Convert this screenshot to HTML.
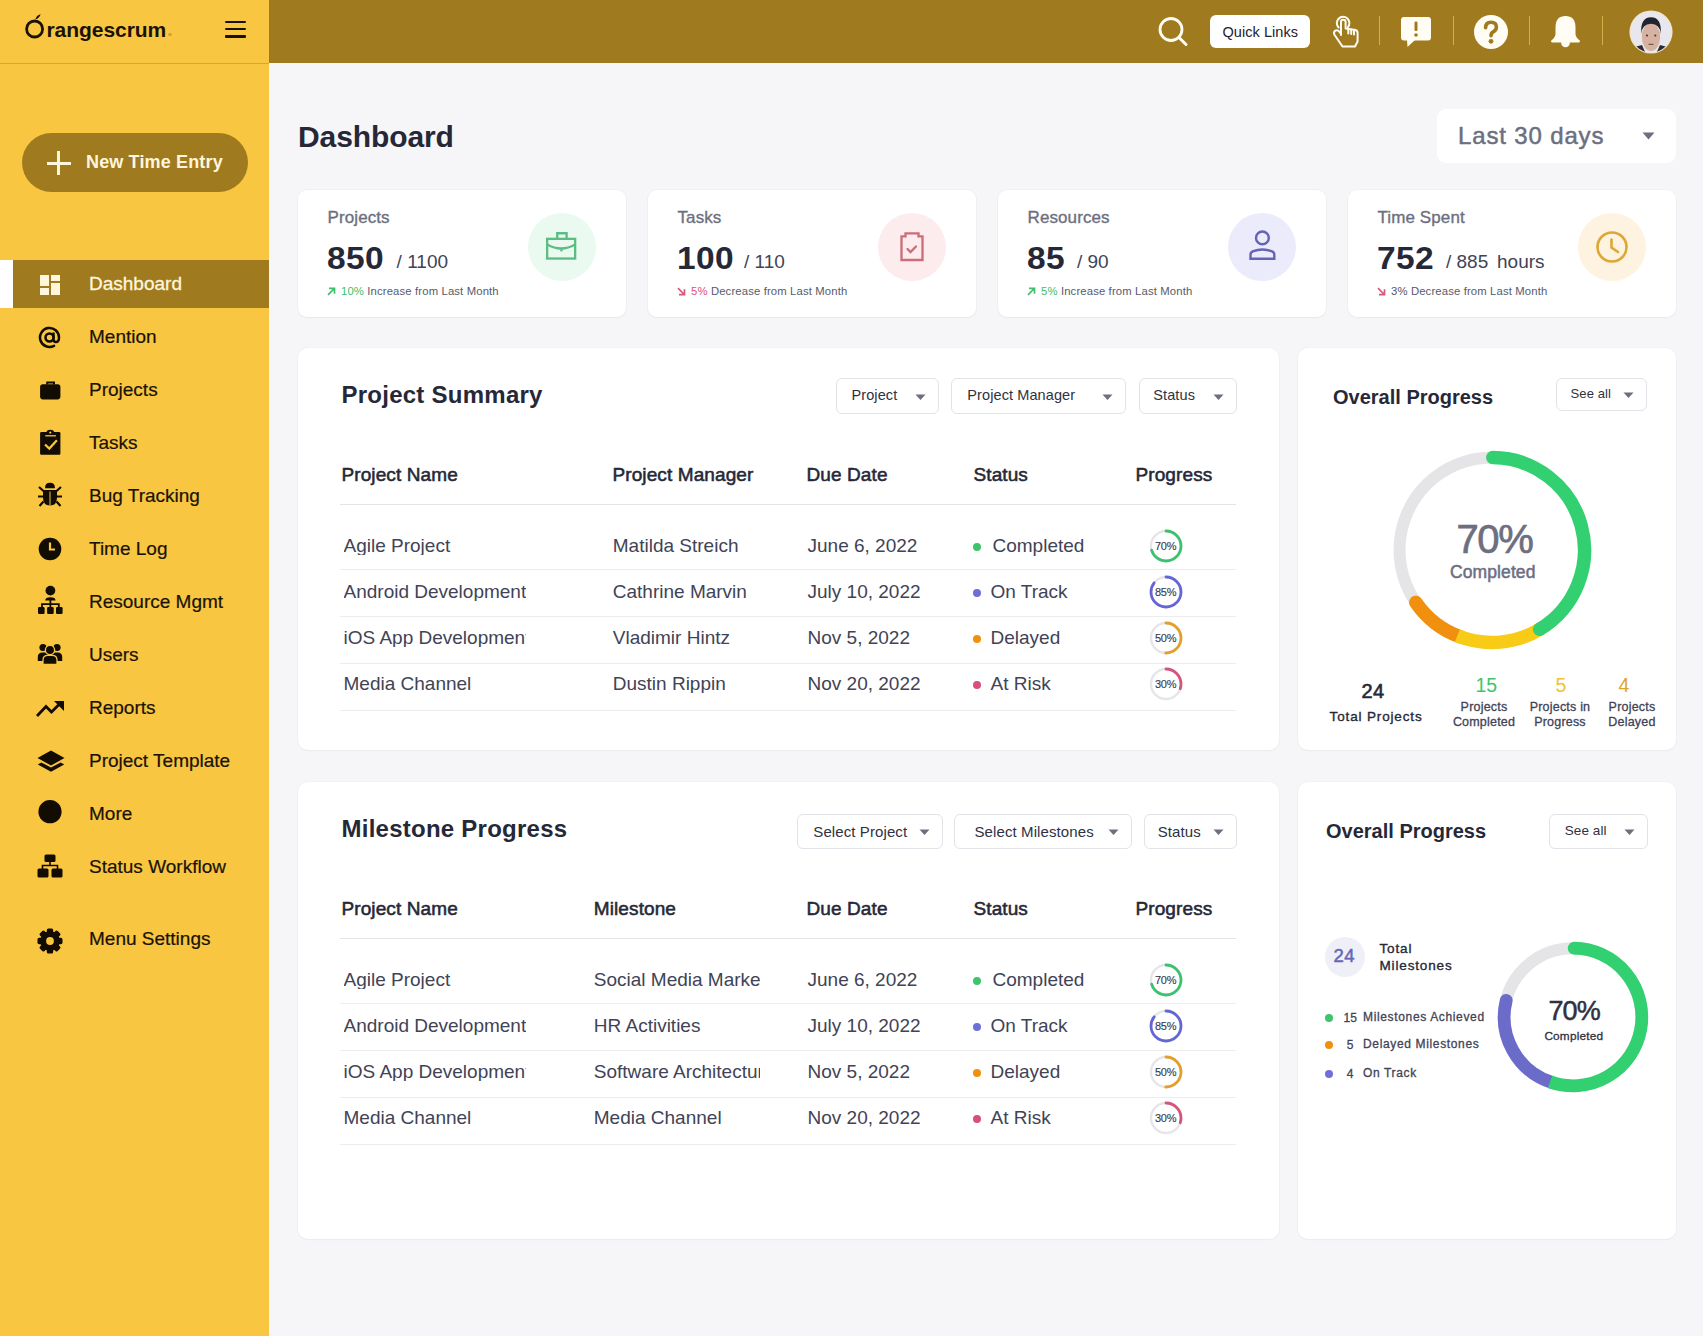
<!DOCTYPE html>
<html><head><meta charset="utf-8"><style>
html,body{margin:0;padding:0;width:1703px;height:1336px;overflow:hidden;background:#F6F6F9;}
body{position:relative;font-family:"Liberation Sans",sans-serif;}
.t{position:absolute;line-height:1;white-space:nowrap;}
</style></head><body>
<div style="position:absolute;left:0px;top:0px;width:269px;height:1336px;background:#F8C640;"></div>
<div style="position:absolute;left:0px;top:63px;width:269px;height:1px;background:#DDA52A;"></div>
<svg style="position:absolute;left:24px;top:12px" width="24" height="28" viewBox="0 0 24 28"><circle cx="10.6" cy="17" r="8" fill="none" stroke="#1A1208" stroke-width="2.8"/><path d="M11.2 7.6 Q12.5 3.2 16.6 2.2 Q15.6 6.2 11.2 7.6 Z" fill="#1A1208"/></svg>
<div class="t" style="left:46.5px;top:18.52px;font-size:21px;color:#1A1208;font-weight:700;letter-spacing:-0.05px;">rangescrum</div>
<div style="position:absolute;left:168px;top:32.5px;width:3.5px;height:3.5px;background:#E39A3A;border-radius:50%"></div>
<div style="position:absolute;left:225px;top:20.5px;width:21px;height:2.5px;background:#1A1208;border-radius:1px"></div>
<div style="position:absolute;left:225px;top:27.75px;width:21px;height:2.5px;background:#1A1208;border-radius:1px"></div>
<div style="position:absolute;left:225px;top:35px;width:21px;height:2.5px;background:#1A1208;border-radius:1px"></div>
<div style="position:absolute;left:22px;top:133px;width:226px;height:59px;background:#A07A1F;border-radius:30px"></div>
<div style="position:absolute;left:46.5px;top:161.8px;width:24px;height:2.8px;background:#FFF6DC;"></div>
<div style="position:absolute;left:57px;top:151px;width:2.8px;height:24px;background:#FFF6DC;"></div>
<div class="t" style="left:86px;top:153.26px;font-size:18px;color:#FFF6DC;font-weight:700;letter-spacing:0.15px;">New Time Entry</div>
<div style="position:absolute;left:0px;top:260px;width:13px;height:48px;background:#FFFFFF;"></div>
<div style="position:absolute;left:13px;top:260px;width:256px;height:48px;background:#A07A1F;"></div>
<svg style="position:absolute;left:40px;top:275px" width="20" height="20" viewBox="0 0 20 20"><rect x="0" y="0" width="9" height="11" fill="#FFF6DC"/><rect x="11" y="0" width="9" height="6" fill="#FFF6DC"/><rect x="0" y="13" width="9" height="7" fill="#FFF6DC"/><rect x="11" y="8" width="9" height="12" fill="#FFF6DC"/></svg>
<div class="t" style="left:89px;top:273.92px;font-size:19px;color:#FFF6DC;-webkit-text-stroke:0.3px #FFF6DC;">Dashboard</div>
<div class="t" style="left:89px;top:326.92px;font-size:19px;color:#1A1208;-webkit-text-stroke:0.2px #1A1208;">Mention</div>
<div class="t" style="left:89px;top:379.92px;font-size:19px;color:#1A1208;-webkit-text-stroke:0.2px #1A1208;">Projects</div>
<div class="t" style="left:89px;top:432.92px;font-size:19px;color:#1A1208;-webkit-text-stroke:0.2px #1A1208;">Tasks</div>
<div class="t" style="left:89px;top:485.92px;font-size:19px;color:#1A1208;-webkit-text-stroke:0.2px #1A1208;">Bug Tracking</div>
<div class="t" style="left:89px;top:538.92px;font-size:19px;color:#1A1208;-webkit-text-stroke:0.2px #1A1208;">Time Log</div>
<div class="t" style="left:89px;top:591.92px;font-size:19px;color:#1A1208;-webkit-text-stroke:0.2px #1A1208;">Resource Mgmt</div>
<div class="t" style="left:89px;top:644.92px;font-size:19px;color:#1A1208;-webkit-text-stroke:0.2px #1A1208;">Users</div>
<div class="t" style="left:89px;top:697.92px;font-size:19px;color:#1A1208;-webkit-text-stroke:0.2px #1A1208;">Reports</div>
<div class="t" style="left:89px;top:750.92px;font-size:19px;color:#1A1208;-webkit-text-stroke:0.2px #1A1208;">Project Template</div>
<div class="t" style="left:89px;top:803.92px;font-size:19px;color:#1A1208;-webkit-text-stroke:0.2px #1A1208;">More</div>
<div class="t" style="left:89px;top:856.92px;font-size:19px;color:#1A1208;-webkit-text-stroke:0.2px #1A1208;">Status Workflow</div>
<div class="t" style="left:89px;top:928.92px;font-size:19px;color:#1A1208;-webkit-text-stroke:0.2px #1A1208;">Menu Settings</div>
<svg style="position:absolute;left:38px;top:326px" width="23" height="23" viewBox="0 0 23 23"><circle cx="11.5" cy="11.5" r="4" fill="none" stroke="#120C02" stroke-width="2.5"/><path d="M15.5 7.5 V13.5 Q15.5 16 18 16 Q21 16 21 11.5 A9.5 9.5 0 1 0 16 19.8" fill="none" stroke="#120C02" stroke-width="2.5" stroke-linecap="round"/></svg>
<svg style="position:absolute;left:40px;top:380px" width="22" height="20" viewBox="0 0 22 20"><path d="M7.2 4.5 V2.4 H14 V4.5" fill="none" stroke="#120C02" stroke-width="2"/><rect x="0.1" y="4.2" width="20.3" height="15.2" rx="2.8" fill="#120C02"/></svg>
<svg style="position:absolute;left:40px;top:428px" width="22" height="28" viewBox="0 0 22 28"><rect x="0.1" y="4" width="20.3" height="22.8" rx="1.3" fill="#120C02"/><path d="M6.5 4.5 Q6.5 1.8 10.3 1.8 Q14.1 1.8 14.1 4.5 Z" fill="#120C02"/><path d="M5.3 7.8 H15.9" stroke="#F8C640" stroke-width="1.3"/><circle cx="10.3" cy="4.6" r="1.1" fill="#F8C640"/><path d="M5 16.5 L9.3 20.6 L16.9 12.3" fill="none" stroke="#F8C640" stroke-width="2.2"/></svg>
<svg style="position:absolute;left:37px;top:482px" width="26" height="26" viewBox="0 0 26 26"><path d="M8 6.2 Q8 0.8 13 0.8 Q18 0.8 18 6.2 Z" fill="#120C02"/><path d="M6 8 H20 V15.5 Q20 23.5 13 23.5 Q6 23.5 6 15.5 Z" fill="#120C02"/><path d="M13 9.5 V23.5" stroke="#F8C640" stroke-width="1"/><path d="M1 14.5 H6 M20 14.5 H25 M2 5 L6.5 9 M24 5 L19.5 9 M2.5 24 L6.5 19.5 M23.5 24 L19.5 19.5" stroke="#120C02" stroke-width="2.2"/></svg>
<svg style="position:absolute;left:38px;top:537px" width="24" height="24" viewBox="0 0 24 24"><circle cx="12" cy="12" r="11.3" fill="#120C02"/><path d="M12 5.5 V12.5 H17" fill="none" stroke="#F8C640" stroke-width="2.2"/></svg>
<svg style="position:absolute;left:37px;top:585px" width="27" height="30" viewBox="0 0 27 30"><circle cx="13.4" cy="5.6" r="4.9" fill="#120C02"/><path d="M8.2 15.6 Q8.2 12.2 13.4 12.2 Q18.6 12.2 18.6 15.6 Z" fill="#120C02"/><path d="M5 22.5 V19.2 H21.8 V22.5 M13.4 15 V22.5" fill="none" stroke="#120C02" stroke-width="1.8"/><rect x="1" y="22" width="6.6" height="7" rx="1.2" fill="#120C02"/><rect x="10.1" y="22" width="6.6" height="7" rx="1.2" fill="#120C02"/><rect x="19" y="22" width="6.6" height="7" rx="1.2" fill="#120C02"/></svg>
<svg style="position:absolute;left:37px;top:642px" width="26" height="24" viewBox="0 0 26 24"><circle cx="6" cy="5.5" r="3.6" fill="#120C02"/><circle cx="20" cy="5.5" r="3.6" fill="#120C02"/><path d="M0.8 19 V15 Q0.8 10.5 5.5 10.5 H8 Q10 10.5 11 12 V19 Z" fill="#120C02"/><path d="M25.2 19 V15 Q25.2 10.5 20.5 10.5 H18 Q16 10.5 15 12 V19 Z" fill="#120C02"/><circle cx="13" cy="8" r="4.6" fill="#120C02" stroke="#F8C640" stroke-width="1.3"/><path d="M6 22.5 V18 Q6 13.3 11 13.3 H15 Q20 13.3 20 18 V22.5 Z" fill="#120C02" stroke="#F8C640" stroke-width="1.3"/></svg>
<svg style="position:absolute;left:36px;top:700px" width="29" height="17" viewBox="0 0 29 17"><path d="M1 16 L10 6.5 L15.5 12 L24 3.5" fill="none" stroke="#120C02" stroke-width="2.8"/><path d="M18 1 H28 V11 Z" fill="#120C02"/></svg>
<svg style="position:absolute;left:37px;top:750px" width="28" height="22" viewBox="0 0 28 22"><path d="M14 0.5 L27.5 8 L14 15.5 L0.5 8 Z" fill="#120C02"/><path d="M0.8 14.4 L4.3 12.4 L14 17.6 L23.7 12.4 L27.2 14.4 L14 21.8 Z" fill="#120C02"/></svg>
<svg style="position:absolute;left:38px;top:800px" width="24" height="24" viewBox="0 0 24 24"><circle cx="12" cy="11.7" r="11.6" fill="#120C02"/></svg>
<svg style="position:absolute;left:37px;top:854px" width="26" height="24" viewBox="0 0 26 24"><rect x="7.5" y="0.5" width="11" height="7.5" rx="1.5" fill="#120C02"/><path d="M13 8 V11.5 M5.5 15 V11.5 H20.5 V15" fill="none" stroke="#120C02" stroke-width="1.6"/><rect x="0.5" y="14.5" width="11" height="9" rx="1.5" fill="#120C02"/><rect x="14.5" y="14.5" width="11" height="9" rx="1.5" fill="#120C02"/></svg>
<svg style="position:absolute;left:37px;top:928px" width="26" height="26" viewBox="0 0 26 26"><rect x="9.8" y="0.5" width="6.4" height="25" rx="1.6" fill="#120C02" transform="rotate(0 13 13)"/><rect x="9.8" y="0.5" width="6.4" height="25" rx="1.6" fill="#120C02" transform="rotate(45 13 13)"/><rect x="9.8" y="0.5" width="6.4" height="25" rx="1.6" fill="#120C02" transform="rotate(90 13 13)"/><rect x="9.8" y="0.5" width="6.4" height="25" rx="1.6" fill="#120C02" transform="rotate(135 13 13)"/><circle cx="13" cy="13" r="9.8" fill="#120C02"/><circle cx="13" cy="13" r="3.9" fill="#F8C640"/></svg>
<div style="position:absolute;left:269px;top:0px;width:1434px;height:63px;background:#A07A1F;"></div>
<svg style="position:absolute;left:1157px;top:16px" width="34" height="33" viewBox="0 0 34 33"><circle cx="14" cy="13.5" r="11" fill="none" stroke="#FFFDF4" stroke-width="2.8"/><path d="M22 21.5 L29 28.5" stroke="#FFFDF4" stroke-width="3" stroke-linecap="round"/></svg>
<div style="position:absolute;left:1210px;top:15px;width:100px;height:33px;background:#FFFFFF;border-radius:6px"></div>
<div class="t" style="left:1222.5px;top:24.73px;font-size:14.5px;color:#1F2030;letter-spacing:0.05px;">Quick Links</div>
<svg style="position:absolute;left:1325px;top:10px" width="40" height="42" viewBox="0 0 40 42"><g fill="none" stroke="#FFFDF4" stroke-width="2" stroke-linejoin="round" stroke-linecap="round"><path d="M13.6 17.5 A6.3 6.3 0 1 1 22.8 17.3"/><path d="M16 25 V12 Q16 9.7 18.3 9.7 Q20.6 9.7 20.6 12 V18.5 L30.3 20 Q32.6 20.5 32.6 23 V31.5 L30 36.5 H17.5 L9.3 24.5 Q8.3 22 10.3 20.6 Q12.5 19.4 14.3 21.6 L16 24"/><path d="M23.3 18.8 V23.5 M26.2 19.4 V24 M29 19.8 V24.5"/></g></svg>
<div style="position:absolute;left:1378.5px;top:16px;width:1.5px;height:29px;background:#D7AE4E;"></div>
<div style="position:absolute;left:1452.5px;top:16px;width:1.5px;height:29px;background:#D7AE4E;"></div>
<div style="position:absolute;left:1528.5px;top:16px;width:1.5px;height:29px;background:#D7AE4E;"></div>
<div style="position:absolute;left:1601.5px;top:16px;width:1.5px;height:29px;background:#D7AE4E;"></div>
<svg style="position:absolute;left:1400px;top:16px" width="32" height="32" viewBox="0 0 32 32"><rect x="1" y="1" width="30" height="23.5" rx="3" fill="#FFFDF4"/><path d="M7 24 L7.5 31 L15 24 Z" fill="#FFFDF4"/><rect x="14.5" y="5.5" width="3" height="9.5" rx="1.2" fill="#A07A1F"/><circle cx="16" cy="19" r="1.8" fill="#A07A1F"/></svg>
<svg style="position:absolute;left:1473px;top:14px" width="36" height="36" viewBox="0 0 36 36"><circle cx="18" cy="18" r="17" fill="#FFFDF4"/><path d="M12.6 13.8 Q12.6 8.2 18 8.2 Q23.4 8.2 23.4 13 Q23.4 16.2 20.2 17.8 Q18 19 18 21.8" fill="none" stroke="#A07A1F" stroke-width="3.6" stroke-linecap="round"/><circle cx="18" cy="27.3" r="2.4" fill="#A07A1F"/></svg>
<svg style="position:absolute;left:1550px;top:15px" width="32" height="33" viewBox="0 0 32 33"><path d="M15.5 1 Q25.3 1 25.5 12 V19 Q26 23 29.5 25.3 Q30.8 27.2 28.5 27.5 H2.5 Q0.2 27.2 1.5 25.3 Q5 23 5.5 19 V12 Q5.7 1 15.5 1 Z" fill="#FFFDF4"/><circle cx="15.5" cy="28" r="4.3" fill="#FFFDF4"/></svg>
<svg style="position:absolute;left:1629px;top:10px" width="44" height="44" viewBox="0 0 44 44"><defs><clipPath id="av"><circle cx="22" cy="22" r="20.6"/></clipPath></defs><circle cx="22" cy="22" r="21.6" fill="#F2E3C0"/><g clip-path="url(#av)"><rect width="44" height="44" fill="#E7E7ED"/><path d="M2 38 L13 35 L17 44 H2 Z" fill="#2A2C34"/><path d="M42 38 L31 35 L27 44 H42 Z" fill="#2A2C34"/><ellipse cx="22" cy="27" rx="9.2" ry="14" fill="#D6B2A2"/><path d="M12.3 24 Q11 7.5 22 7.3 Q33 7.5 31.7 24 Q31 14 22 13.8 Q13 14 12.3 24 Z" fill="#222530"/><circle cx="18" cy="25.5" r="1.1" fill="#4A3A30"/><circle cx="26.3" cy="25.5" r="1.1" fill="#4A3A30"/><path d="M19.5 34.3 H24.5" stroke="#7A5A48" stroke-width="1.3"/></g></svg>
<div style="position:absolute;left:269px;top:63px;width:1434px;height:1273px;background:#F6F6F9;"></div>
<div class="t" style="left:298px;top:121.61px;font-size:30px;color:#262837;font-weight:700;letter-spacing:-0.1px;">Dashboard</div>
<div style="position:absolute;left:1437px;top:109px;width:239px;height:54px;background:#FFFFFF;border-radius:9px"></div>
<div class="t" style="left:1458px;top:124.48px;font-size:24px;color:#6D6F7E;letter-spacing:0.85px;-webkit-text-stroke:0.5px #6D6F7E;">Last 30 days</div>
<svg style="position:absolute;left:1642px;top:132px" width="13" height="8" viewBox="0 0 13 8"><path d="M0.5 0.5 H12.5 L6.5 7.5 Z" fill="#6D6F7E"/></svg>
<div style="position:absolute;left:298px;top:190px;width:328px;height:127px;background:#FFFFFF;border-radius:9px;box-shadow:0 0 0 1px rgba(30,30,80,0.025),0 1px 2px rgba(0,0,0,0.04)"></div>
<div class="t" style="left:327.5px;top:208.81px;font-size:17px;color:#6D6F7E;letter-spacing:0.1px;-webkit-text-stroke:0.35px #6D6F7E;">Projects</div>
<div class="t" style="left:326.5px;top:242.56px;font-size:31px;color:#262837;font-weight:700;letter-spacing:0.4px;transform:scaleX(1.08);transform-origin:0 0;">850</div>
<div class="t" style="left:396.6px;top:252.32px;font-size:19px;color:#414356;">/ 1100</div>
<div style="position:absolute;left:528px;top:213px;width:68px;height:68px;border-radius:50%;background:#EAFAF0"></div>
<svg style="position:absolute;left:546px;top:231px" width="34" height="30" viewBox="0 0 34 30"><g fill="none" stroke="#5CBD83" stroke-width="2.3"><rect x="1.15" y="7.85" width="28" height="19.7"/><path d="M11.2 7.85 V2.25 H20.6 V7.85"/><path d="M1.15 13.5 Q15.15 21.5 29.15 13.5"/></g><rect x="14.3" y="17" width="2.2" height="3.5" fill="#5CBD83"/></svg>
<svg style="position:absolute;left:327px;top:287px" width="9" height="9" viewBox="0 0 9 9"><path d="M1 7.8 L6.8 2 M2 1.3 H7.5 V6.8" fill="none" stroke="#3DBF6C" stroke-width="1.7"/></svg>
<div class="t" style="left:341px;top:285.93px;font-size:11.3px;color:#585A6A;letter-spacing:0.14px;"><span style="color:#3DBF6C">10%</span> Increase from Last Month</div>
<div style="position:absolute;left:648px;top:190px;width:328px;height:127px;background:#FFFFFF;border-radius:9px;box-shadow:0 0 0 1px rgba(30,30,80,0.025),0 1px 2px rgba(0,0,0,0.04)"></div>
<div class="t" style="left:677.5px;top:208.81px;font-size:17px;color:#6D6F7E;letter-spacing:0.1px;-webkit-text-stroke:0.35px #6D6F7E;">Tasks</div>
<div class="t" style="left:676.5px;top:242.56px;font-size:31px;color:#262837;font-weight:700;letter-spacing:0.4px;transform:scaleX(1.08);transform-origin:0 0;">100</div>
<div class="t" style="left:744px;top:252.32px;font-size:19px;color:#414356;">/ 110</div>
<div style="position:absolute;left:878px;top:213px;width:68px;height:68px;border-radius:50%;background:#FDECEE"></div>
<svg style="position:absolute;left:899px;top:231px" width="26" height="32" viewBox="0 0 26 32"><g fill="none" stroke="#CD6B77" stroke-width="2.3" stroke-linejoin="miter"><path d="M2.5 5.3 H6.5 V2.3 H19.5 V5.3 H23.5 V29 H2.5 Z"/><path d="M8.5 18 L11.5 21 L17 15.5" stroke-linecap="round"/></g></svg>
<svg style="position:absolute;left:677px;top:287px" width="9" height="9" viewBox="0 0 9 9"><path d="M1 1.2 L6.8 7 M2 7.7 H7.5 V2.2" fill="none" stroke="#D9557A" stroke-width="1.7"/></svg>
<div class="t" style="left:691px;top:285.93px;font-size:11.3px;color:#585A6A;letter-spacing:0.14px;"><span style="color:#D9557A">5%</span> Decrease from Last Month</div>
<div style="position:absolute;left:998px;top:190px;width:328px;height:127px;background:#FFFFFF;border-radius:9px;box-shadow:0 0 0 1px rgba(30,30,80,0.025),0 1px 2px rgba(0,0,0,0.04)"></div>
<div class="t" style="left:1027.5px;top:208.81px;font-size:17px;color:#6D6F7E;letter-spacing:0.1px;-webkit-text-stroke:0.35px #6D6F7E;">Resources</div>
<div class="t" style="left:1026.5px;top:242.56px;font-size:31px;color:#262837;font-weight:700;letter-spacing:0.4px;transform:scaleX(1.08);transform-origin:0 0;">85</div>
<div class="t" style="left:1077px;top:252.32px;font-size:19px;color:#414356;">/ 90</div>
<div style="position:absolute;left:1228px;top:213px;width:68px;height:68px;border-radius:50%;background:#ECEBFC"></div>
<svg style="position:absolute;left:1245px;top:230px" width="34" height="34" viewBox="0 0 34 34"><g fill="none" stroke="#6463B4" stroke-width="2.4"><circle cx="17.4" cy="7.9" r="6.4"/><path d="M5.5 28.7 V24.5 Q5.5 22.3 8.3 21.2 Q17.4 17.8 26.5 21.2 Q29.3 22.3 29.3 24.5 V28.7 Z"/></g></svg>
<svg style="position:absolute;left:1027px;top:287px" width="9" height="9" viewBox="0 0 9 9"><path d="M1 7.8 L6.8 2 M2 1.3 H7.5 V6.8" fill="none" stroke="#3DBF6C" stroke-width="1.7"/></svg>
<div class="t" style="left:1041px;top:285.93px;font-size:11.3px;color:#585A6A;letter-spacing:0.14px;"><span style="color:#3DBF6C">5%</span> Increase from Last Month</div>
<div style="position:absolute;left:1348px;top:190px;width:328px;height:127px;background:#FFFFFF;border-radius:9px;box-shadow:0 0 0 1px rgba(30,30,80,0.025),0 1px 2px rgba(0,0,0,0.04)"></div>
<div class="t" style="left:1377.5px;top:208.81px;font-size:17px;color:#6D6F7E;letter-spacing:0.1px;-webkit-text-stroke:0.35px #6D6F7E;">Time Spent</div>
<div class="t" style="left:1376.5px;top:242.56px;font-size:31px;color:#262837;font-weight:700;letter-spacing:0.4px;transform:scaleX(1.08);transform-origin:0 0;">752</div>
<div class="t" style="left:1446px;top:252.32px;font-size:19px;color:#414356;">/ 885</div>
<div class="t" style="left:1497px;top:252.32px;font-size:19px;color:#414356;">hours</div>
<div style="position:absolute;left:1578px;top:213px;width:68px;height:68px;border-radius:50%;background:#FEF3E0"></div>
<svg style="position:absolute;left:1594px;top:229px" width="36" height="36" viewBox="0 0 36 36"><g fill="none" stroke="#DCA733" stroke-width="2.6" stroke-linecap="round"><circle cx="18" cy="18" r="14.5"/><path d="M17.5 10.5 V18.5 L24 23"/></g></svg>
<svg style="position:absolute;left:1377px;top:287px" width="9" height="9" viewBox="0 0 9 9"><path d="M1 1.2 L6.8 7 M2 7.7 H7.5 V2.2" fill="none" stroke="#D9557A" stroke-width="1.7"/></svg>
<div class="t" style="left:1391px;top:285.93px;font-size:11.3px;color:#585A6A;letter-spacing:0.14px;"><span style="color:#555768">3%</span> Decrease from Last Month</div>
<div style="position:absolute;left:298px;top:348px;width:981px;height:402px;background:#FFFFFF;border-radius:10px;box-shadow:0 0 0 1px rgba(30,30,80,0.02),0 1px 2px rgba(0,0,0,0.03)"></div>
<div style="position:absolute;left:1298px;top:348px;width:378px;height:402px;background:#FFFFFF;border-radius:10px;box-shadow:0 0 0 1px rgba(30,30,80,0.02),0 1px 2px rgba(0,0,0,0.03)"></div>
<div style="position:absolute;left:298px;top:782px;width:981px;height:457px;background:#FFFFFF;border-radius:10px;box-shadow:0 0 0 1px rgba(30,30,80,0.02),0 1px 2px rgba(0,0,0,0.03)"></div>
<div style="position:absolute;left:1298px;top:782px;width:378px;height:457px;background:#FFFFFF;border-radius:10px;box-shadow:0 0 0 1px rgba(30,30,80,0.02),0 1px 2px rgba(0,0,0,0.03)"></div>
<div class="t" style="left:341.5px;top:383.18px;font-size:24px;color:#262837;font-weight:700;letter-spacing:0.25px;">Project Summary</div>
<div style="position:absolute;left:836px;top:378px;width:101px;height:34px;border:1px solid #E2E3E8;border-radius:6px;background:#fff"></div>
<div class="t" style="left:851.5px;top:388.37px;font-size:14.5px;color:#2F3142;letter-spacing:0.1px;">Project</div>
<svg style="position:absolute;left:915px;top:393.5px" width="11" height="7" viewBox="0 0 11 7"><path d="M0.5 0.5 H10.5 L5.5 6 Z" fill="#6D6F7E"/></svg>
<div style="position:absolute;left:950.5px;top:378px;width:173.0px;height:34px;border:1px solid #E2E3E8;border-radius:6px;background:#fff"></div>
<div class="t" style="left:967.3px;top:388.37px;font-size:14.5px;color:#2F3142;letter-spacing:0.1px;">Project Manager</div>
<svg style="position:absolute;left:1101.5px;top:393.5px" width="11" height="7" viewBox="0 0 11 7"><path d="M0.5 0.5 H10.5 L5.5 6 Z" fill="#6D6F7E"/></svg>
<div style="position:absolute;left:1138.5px;top:378px;width:96.5px;height:34px;border:1px solid #E2E3E8;border-radius:6px;background:#fff"></div>
<div class="t" style="left:1153.3px;top:388.37px;font-size:14.5px;color:#2F3142;letter-spacing:0.1px;">Status</div>
<svg style="position:absolute;left:1213px;top:393.5px" width="11" height="7" viewBox="0 0 11 7"><path d="M0.5 0.5 H10.5 L5.5 6 Z" fill="#6D6F7E"/></svg>
<div class="t" style="left:341.5px;top:465.32px;font-size:19px;color:#262837;letter-spacing:0.1px;-webkit-text-stroke:0.55px #262837;">Project Name</div>
<div class="t" style="left:612.5px;top:465.32px;font-size:19px;color:#262837;letter-spacing:0.1px;-webkit-text-stroke:0.55px #262837;">Project Manager</div>
<div class="t" style="left:806.5px;top:465.32px;font-size:19px;color:#262837;letter-spacing:0.1px;-webkit-text-stroke:0.55px #262837;">Due Date</div>
<div class="t" style="left:973.5px;top:465.32px;font-size:19px;color:#262837;letter-spacing:0.1px;-webkit-text-stroke:0.55px #262837;">Status</div>
<div class="t" style="left:1135.5px;top:465.32px;font-size:19px;color:#262837;letter-spacing:0.1px;-webkit-text-stroke:0.55px #262837;">Progress</div>
<div style="position:absolute;left:340px;top:504px;width:896px;height:1.2px;background:#E4E4E8;"></div>
<div class="t" style="left:343.5px;top:535.82px;font-size:19px;color:#414356;width:182px;overflow:hidden;">Agile Project</div>
<div class="t" style="left:612.8px;top:535.82px;font-size:19px;color:#414356;width:170px;overflow:hidden;">Matilda Streich</div>
<div class="t" style="left:807.5px;top:535.82px;font-size:19px;color:#414356;">June 6, 2022</div>
<div style="position:absolute;left:973px;top:542.50px;width:8px;height:8px;border-radius:50%;background:#3DC46C"></div>
<div class="t" style="left:992.5px;top:535.82px;font-size:19px;color:#414356;">Completed</div>
<svg style="position:absolute;left:1147.6px;top:528.0px" width="36" height="36" viewBox="0 0 36 36"><circle cx="18" cy="18" r="15" fill="none" stroke="#E6E6EA" stroke-width="2.4"/><circle cx="18" cy="18" r="15" fill="none" stroke="#3CC26E" stroke-width="2.8" stroke-dasharray="65.97 94.25" stroke-linecap="round" transform="rotate(-90 18 18)"/></svg>
<div class="t" style="left:1145.6px;top:540.69px;font-size:11px;color:#3A3C4C;letter-spacing:-0.3px;-webkit-text-stroke:0.15px #3A3C4C;width:40px;text-align:center;">70%</div>
<div style="position:absolute;left:340px;top:569px;width:896px;height:1px;background:#EDEDF0;"></div>
<div class="t" style="left:343.5px;top:581.89px;font-size:19px;color:#414356;width:182px;overflow:hidden;">Android Development</div>
<div class="t" style="left:612.8px;top:581.89px;font-size:19px;color:#414356;width:170px;overflow:hidden;">Cathrine Marvin</div>
<div class="t" style="left:807.5px;top:581.89px;font-size:19px;color:#414356;">July 10, 2022</div>
<div style="position:absolute;left:973px;top:588.57px;width:8px;height:8px;border-radius:50%;background:#6E6FD8"></div>
<div class="t" style="left:990.5px;top:581.89px;font-size:19px;color:#414356;">On Track</div>
<svg style="position:absolute;left:1147.6px;top:574.07px" width="36" height="36" viewBox="0 0 36 36"><circle cx="18" cy="18" r="15" fill="none" stroke="#E6E6EA" stroke-width="2.4"/><circle cx="18" cy="18" r="15" fill="none" stroke="#6565D6" stroke-width="2.8" stroke-dasharray="80.11 94.25" stroke-linecap="round" transform="rotate(-90 18 18)"/></svg>
<div class="t" style="left:1145.6px;top:586.76px;font-size:11px;color:#3A3C4C;letter-spacing:-0.3px;-webkit-text-stroke:0.15px #3A3C4C;width:40px;text-align:center;">85%</div>
<div style="position:absolute;left:340px;top:616px;width:896px;height:1px;background:#EDEDF0;"></div>
<div class="t" style="left:343.5px;top:627.96px;font-size:19px;color:#414356;width:182px;overflow:hidden;">iOS App Development</div>
<div class="t" style="left:612.8px;top:627.96px;font-size:19px;color:#414356;width:170px;overflow:hidden;">Vladimir Hintz</div>
<div class="t" style="left:807.5px;top:627.96px;font-size:19px;color:#414356;">Nov 5, 2022</div>
<div style="position:absolute;left:973px;top:634.64px;width:8px;height:8px;border-radius:50%;background:#F0900E"></div>
<div class="t" style="left:990.5px;top:627.96px;font-size:19px;color:#414356;">Delayed</div>
<svg style="position:absolute;left:1147.6px;top:620.14px" width="36" height="36" viewBox="0 0 36 36"><circle cx="18" cy="18" r="15" fill="none" stroke="#E6E6EA" stroke-width="2.4"/><circle cx="18" cy="18" r="15" fill="none" stroke="#E2A02A" stroke-width="2.8" stroke-dasharray="47.12 94.25" stroke-linecap="round" transform="rotate(-90 18 18)"/></svg>
<div class="t" style="left:1145.6px;top:632.83px;font-size:11px;color:#3A3C4C;letter-spacing:-0.3px;-webkit-text-stroke:0.15px #3A3C4C;width:40px;text-align:center;">50%</div>
<div style="position:absolute;left:340px;top:663px;width:896px;height:1px;background:#EDEDF0;"></div>
<div class="t" style="left:343.5px;top:674.03px;font-size:19px;color:#414356;width:182px;overflow:hidden;">Media Channel</div>
<div class="t" style="left:612.8px;top:674.03px;font-size:19px;color:#414356;width:170px;overflow:hidden;">Dustin Rippin</div>
<div class="t" style="left:807.5px;top:674.03px;font-size:19px;color:#414356;">Nov 20, 2022</div>
<div style="position:absolute;left:973px;top:680.71px;width:8px;height:8px;border-radius:50%;background:#D84F7A"></div>
<div class="t" style="left:990.5px;top:674.03px;font-size:19px;color:#414356;">At Risk</div>
<svg style="position:absolute;left:1147.6px;top:666.21px" width="36" height="36" viewBox="0 0 36 36"><circle cx="18" cy="18" r="15" fill="none" stroke="#E6E6EA" stroke-width="2.4"/><circle cx="18" cy="18" r="15" fill="none" stroke="#D4557A" stroke-width="2.8" stroke-dasharray="28.27 94.25" stroke-linecap="round" transform="rotate(-90 18 18)"/></svg>
<div class="t" style="left:1145.6px;top:678.90px;font-size:11px;color:#3A3C4C;letter-spacing:-0.3px;-webkit-text-stroke:0.15px #3A3C4C;width:40px;text-align:center;">30%</div>
<div style="position:absolute;left:340px;top:710px;width:896px;height:1px;background:#EDEDF0;"></div>
<div class="t" style="left:341.5px;top:817.18px;font-size:24px;color:#262837;font-weight:700;letter-spacing:0.25px;">Milestone Progress</div>
<div style="position:absolute;left:796.5px;top:814px;width:144.5px;height:33px;border:1px solid #E2E3E8;border-radius:6px;background:#fff"></div>
<div class="t" style="left:813.3px;top:823.60px;font-size:15px;color:#2F3142;letter-spacing:0.1px;">Select Project</div>
<svg style="position:absolute;left:919px;top:829.0px" width="11" height="7" viewBox="0 0 11 7"><path d="M0.5 0.5 H10.5 L5.5 6 Z" fill="#6D6F7E"/></svg>
<div style="position:absolute;left:954px;top:814px;width:176px;height:33px;border:1px solid #E2E3E8;border-radius:6px;background:#fff"></div>
<div class="t" style="left:974.5px;top:823.60px;font-size:15px;color:#2F3142;letter-spacing:0.1px;">Select Milestones</div>
<svg style="position:absolute;left:1108px;top:829.0px" width="11" height="7" viewBox="0 0 11 7"><path d="M0.5 0.5 H10.5 L5.5 6 Z" fill="#6D6F7E"/></svg>
<div style="position:absolute;left:1143.5px;top:814px;width:91.5px;height:33px;border:1px solid #E2E3E8;border-radius:6px;background:#fff"></div>
<div class="t" style="left:1157.7px;top:823.60px;font-size:15px;color:#2F3142;letter-spacing:0.1px;">Status</div>
<svg style="position:absolute;left:1213px;top:829.0px" width="11" height="7" viewBox="0 0 11 7"><path d="M0.5 0.5 H10.5 L5.5 6 Z" fill="#6D6F7E"/></svg>
<div class="t" style="left:341.5px;top:899.32px;font-size:19px;color:#262837;letter-spacing:0.1px;-webkit-text-stroke:0.55px #262837;">Project Name</div>
<div class="t" style="left:593.8px;top:899.32px;font-size:19px;color:#262837;letter-spacing:0.1px;-webkit-text-stroke:0.55px #262837;">Milestone</div>
<div class="t" style="left:806.5px;top:899.32px;font-size:19px;color:#262837;letter-spacing:0.1px;-webkit-text-stroke:0.55px #262837;">Due Date</div>
<div class="t" style="left:973.5px;top:899.32px;font-size:19px;color:#262837;letter-spacing:0.1px;-webkit-text-stroke:0.55px #262837;">Status</div>
<div class="t" style="left:1135.5px;top:899.32px;font-size:19px;color:#262837;letter-spacing:0.1px;-webkit-text-stroke:0.55px #262837;">Progress</div>
<div style="position:absolute;left:340px;top:938px;width:896px;height:1.2px;background:#E4E4E8;"></div>
<div class="t" style="left:343.5px;top:969.82px;font-size:19px;color:#414356;width:182px;overflow:hidden;">Agile Project</div>
<div class="t" style="left:593.8px;top:969.82px;font-size:19px;color:#414356;width:166px;overflow:hidden;">Social Media Marketing</div>
<div class="t" style="left:807.5px;top:969.82px;font-size:19px;color:#414356;">June 6, 2022</div>
<div style="position:absolute;left:973px;top:976.50px;width:8px;height:8px;border-radius:50%;background:#3DC46C"></div>
<div class="t" style="left:992.5px;top:969.82px;font-size:19px;color:#414356;">Completed</div>
<svg style="position:absolute;left:1147.6px;top:962.0px" width="36" height="36" viewBox="0 0 36 36"><circle cx="18" cy="18" r="15" fill="none" stroke="#E6E6EA" stroke-width="2.4"/><circle cx="18" cy="18" r="15" fill="none" stroke="#3CC26E" stroke-width="2.8" stroke-dasharray="65.97 94.25" stroke-linecap="round" transform="rotate(-90 18 18)"/></svg>
<div class="t" style="left:1145.6px;top:974.69px;font-size:11px;color:#3A3C4C;letter-spacing:-0.3px;-webkit-text-stroke:0.15px #3A3C4C;width:40px;text-align:center;">70%</div>
<div style="position:absolute;left:340px;top:1003px;width:896px;height:1px;background:#EDEDF0;"></div>
<div class="t" style="left:343.5px;top:1015.89px;font-size:19px;color:#414356;width:182px;overflow:hidden;">Android Development</div>
<div class="t" style="left:593.8px;top:1015.89px;font-size:19px;color:#414356;width:166px;overflow:hidden;">HR Activities</div>
<div class="t" style="left:807.5px;top:1015.89px;font-size:19px;color:#414356;">July 10, 2022</div>
<div style="position:absolute;left:973px;top:1022.57px;width:8px;height:8px;border-radius:50%;background:#6E6FD8"></div>
<div class="t" style="left:990.5px;top:1015.89px;font-size:19px;color:#414356;">On Track</div>
<svg style="position:absolute;left:1147.6px;top:1008.0699999999999px" width="36" height="36" viewBox="0 0 36 36"><circle cx="18" cy="18" r="15" fill="none" stroke="#E6E6EA" stroke-width="2.4"/><circle cx="18" cy="18" r="15" fill="none" stroke="#6565D6" stroke-width="2.8" stroke-dasharray="80.11 94.25" stroke-linecap="round" transform="rotate(-90 18 18)"/></svg>
<div class="t" style="left:1145.6px;top:1020.76px;font-size:11px;color:#3A3C4C;letter-spacing:-0.3px;-webkit-text-stroke:0.15px #3A3C4C;width:40px;text-align:center;">85%</div>
<div style="position:absolute;left:340px;top:1050px;width:896px;height:1px;background:#EDEDF0;"></div>
<div class="t" style="left:343.5px;top:1061.96px;font-size:19px;color:#414356;width:182px;overflow:hidden;">iOS App Development</div>
<div class="t" style="left:593.8px;top:1061.96px;font-size:19px;color:#414356;width:166px;overflow:hidden;">Software Architecture</div>
<div class="t" style="left:807.5px;top:1061.96px;font-size:19px;color:#414356;">Nov 5, 2022</div>
<div style="position:absolute;left:973px;top:1068.64px;width:8px;height:8px;border-radius:50%;background:#F0900E"></div>
<div class="t" style="left:990.5px;top:1061.96px;font-size:19px;color:#414356;">Delayed</div>
<svg style="position:absolute;left:1147.6px;top:1054.14px" width="36" height="36" viewBox="0 0 36 36"><circle cx="18" cy="18" r="15" fill="none" stroke="#E6E6EA" stroke-width="2.4"/><circle cx="18" cy="18" r="15" fill="none" stroke="#E2A02A" stroke-width="2.8" stroke-dasharray="47.12 94.25" stroke-linecap="round" transform="rotate(-90 18 18)"/></svg>
<div class="t" style="left:1145.6px;top:1066.83px;font-size:11px;color:#3A3C4C;letter-spacing:-0.3px;-webkit-text-stroke:0.15px #3A3C4C;width:40px;text-align:center;">50%</div>
<div style="position:absolute;left:340px;top:1097px;width:896px;height:1px;background:#EDEDF0;"></div>
<div class="t" style="left:343.5px;top:1108.03px;font-size:19px;color:#414356;width:182px;overflow:hidden;">Media Channel</div>
<div class="t" style="left:593.8px;top:1108.03px;font-size:19px;color:#414356;width:166px;overflow:hidden;">Media Channel</div>
<div class="t" style="left:807.5px;top:1108.03px;font-size:19px;color:#414356;">Nov 20, 2022</div>
<div style="position:absolute;left:973px;top:1114.71px;width:8px;height:8px;border-radius:50%;background:#D84F7A"></div>
<div class="t" style="left:990.5px;top:1108.03px;font-size:19px;color:#414356;">At Risk</div>
<svg style="position:absolute;left:1147.6px;top:1100.21px" width="36" height="36" viewBox="0 0 36 36"><circle cx="18" cy="18" r="15" fill="none" stroke="#E6E6EA" stroke-width="2.4"/><circle cx="18" cy="18" r="15" fill="none" stroke="#D4557A" stroke-width="2.8" stroke-dasharray="28.27 94.25" stroke-linecap="round" transform="rotate(-90 18 18)"/></svg>
<div class="t" style="left:1145.6px;top:1112.90px;font-size:11px;color:#3A3C4C;letter-spacing:-0.3px;-webkit-text-stroke:0.15px #3A3C4C;width:40px;text-align:center;">30%</div>
<div style="position:absolute;left:340px;top:1144px;width:896px;height:1px;background:#EDEDF0;"></div>
<div class="t" style="left:1333px;top:387.37px;font-size:20px;color:#262837;font-weight:700;">Overall Progress</div>
<div style="position:absolute;left:1555.5px;top:377.5px;width:89.5px;height:31.5px;border:1px solid #E2E3E8;border-radius:6px;background:#fff"></div>
<div class="t" style="left:1570.6px;top:387.41px;font-size:13px;color:#2F3142;letter-spacing:0.1px;">See all</div>
<svg style="position:absolute;left:1623px;top:391.75px" width="11" height="7" viewBox="0 0 11 7"><path d="M0.5 0.5 H10.5 L5.5 6 Z" fill="#6D6F7E"/></svg>
<svg style="position:absolute;left:1391.6px;top:449.5px" width="200" height="200" viewBox="0 0 200 200"><circle cx="100" cy="100" r="92.5" fill="none" stroke="#E5E5E8" stroke-width="12"/><path d="M68.36 186.92 A92.5 92.5 0 0 1 23.77 152.39" fill="none" stroke="#F0900E" stroke-width="13.5" stroke-linecap="round"/><path d="M149.02 178.44 A92.5 92.5 0 0 1 65.35 185.76" fill="none" stroke="#F7CB16" stroke-width="13.5" stroke-linecap="butt"/><path d="M100.81 7.50 A92.5 92.5 0 0 1 147.64 179.29" fill="none" stroke="#33D071" stroke-width="13.5" stroke-linecap="round"/></svg>
<div class="t" style="left:1456.5px;top:518.94px;font-size:40px;color:#6E6E80;letter-spacing:-1.4px;-webkit-text-stroke:0.7px #6E6E80;">70%</div>
<div class="t" style="left:1450px;top:564.29px;font-size:17.5px;color:#6E6E80;letter-spacing:0.1px;-webkit-text-stroke:0.5px #6E6E80;">Completed</div>
<div class="t" style="left:1361.5px;top:681.07px;font-size:20px;color:#262837;letter-spacing:0.5px;-webkit-text-stroke:0.6px #262837;">24</div>
<div class="t" style="left:1329.6px;top:710.47px;font-size:13.5px;color:#262837;letter-spacing:0.85px;-webkit-text-stroke:0.35px #262837;">Total Projects</div>
<div class="t" style="left:1475.5px;top:676.09px;font-size:19.5px;color:#3DC46F;">15</div>
<div class="t" style="left:1555.5px;top:676.09px;font-size:19.5px;color:#F2C230;">5</div>
<div class="t" style="left:1618.5px;top:676.09px;font-size:19.5px;color:#E2A32B;">4</div>
<div class="t" style="left:1434px;top:700.42px;width:100px;text-align:center;font-size:12.5px;line-height:14.6px;color:#414356;letter-spacing:0.2px;-webkit-text-stroke:0.3px #414356">Projects<br>Completed</div>
<div class="t" style="left:1510px;top:700.42px;width:100px;text-align:center;font-size:12.5px;line-height:14.6px;color:#414356;letter-spacing:0.2px;-webkit-text-stroke:0.3px #414356">Projects in<br>Progress</div>
<div class="t" style="left:1582px;top:700.42px;width:100px;text-align:center;font-size:12.5px;line-height:14.6px;color:#414356;letter-spacing:0.2px;-webkit-text-stroke:0.3px #414356">Projects<br>Delayed</div>
<div class="t" style="left:1326px;top:821.27px;font-size:20px;color:#262837;font-weight:700;">Overall Progress</div>
<div style="position:absolute;left:1548.5px;top:813.5px;width:97.5px;height:33.5px;border:1px solid #E2E3E8;border-radius:6px;background:#fff"></div>
<div class="t" style="left:1564.7px;top:824.14px;font-size:13.5px;color:#2F3142;letter-spacing:0.1px;">See all</div>
<svg style="position:absolute;left:1624px;top:828.75px" width="11" height="7" viewBox="0 0 11 7"><path d="M0.5 0.5 H10.5 L5.5 6 Z" fill="#6D6F7E"/></svg>
<div style="position:absolute;left:1325px;top:936.5px;width:40px;height:40px;border-radius:50%;background:#EFEFF8"></div>
<div class="t" style="left:1333.5px;top:946.74px;font-size:18.5px;color:#6566B5;letter-spacing:0.4px;-webkit-text-stroke:0.5px #6566B5;">24</div>
<div class="t" style="left:1379.5px;top:941.07px;font-size:13.5px;line-height:16.9px;color:#262837;letter-spacing:0.85px;-webkit-text-stroke:0.35px #262837">Total<br>Milestones</div>
<div style="position:absolute;left:1325.3px;top:1013.8px;width:8px;height:8px;border-radius:50%;background:#3DC46C"></div>
<div class="t" style="left:1343.4px;top:1011.94px;font-size:12px;color:#414356;letter-spacing:0.3px;-webkit-text-stroke:0.3px #414356;">15</div>
<div class="t" style="left:1363px;top:1011.14px;font-size:12px;color:#414356;letter-spacing:0.65px;-webkit-text-stroke:0.3px #414356;">Milestones Achieved</div>
<div style="position:absolute;left:1325.3px;top:1040.9px;width:8px;height:8px;border-radius:50%;background:#F0900E"></div>
<div class="t" style="left:1346.7px;top:1039.04px;font-size:12px;color:#414356;letter-spacing:0.3px;-webkit-text-stroke:0.3px #414356;">5</div>
<div class="t" style="left:1363px;top:1038.24px;font-size:12px;color:#414356;letter-spacing:0.65px;-webkit-text-stroke:0.3px #414356;">Delayed Milestones</div>
<div style="position:absolute;left:1325.3px;top:1069.8px;width:8px;height:8px;border-radius:50%;background:#6E6FD8"></div>
<div class="t" style="left:1346.7px;top:1067.94px;font-size:12px;color:#414356;letter-spacing:0.3px;-webkit-text-stroke:0.3px #414356;">4</div>
<div class="t" style="left:1363px;top:1067.14px;font-size:12px;color:#414356;letter-spacing:0.65px;-webkit-text-stroke:0.3px #414356;">On Track</div>
<svg style="position:absolute;left:1492.5px;top:936.7px" width="160" height="160" viewBox="0 0 160 160"><circle cx="80" cy="80" r="68.8" fill="none" stroke="#E5E5E8" stroke-width="12"/><path d="M58.74 145.43 A68.8 68.8 0 0 1 13.24 63.36" fill="none" stroke="#6B6BC9" stroke-width="12.8" stroke-linecap="round"/><path d="M81.20 11.21 A68.8 68.8 0 1 1 57.03 144.85" fill="none" stroke="#33D071" stroke-width="12.8" stroke-linecap="butt"/><circle cx="81.2" cy="11.2" r="6.4" fill="#33D071"/></svg>
<div class="t" style="left:1548.5px;top:998.14px;font-size:27px;color:#2F3040;letter-spacing:-0.9px;-webkit-text-stroke:0.5px #2F3040;">70%</div>
<div class="t" style="left:1544.4px;top:1031.21px;font-size:11.8px;color:#2F3040;letter-spacing:0.2px;-webkit-text-stroke:0.3px #2F3040;">Completed</div>
</body></html>
